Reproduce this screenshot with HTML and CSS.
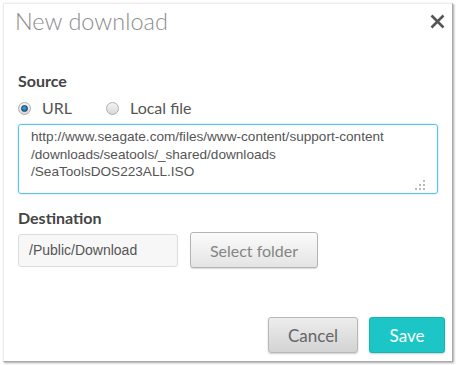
FILE: index.html
```html
<!DOCTYPE html>
<html lang="en">
<head>
    <meta charset="UTF-8">
    <title>New download</title>
    <link rel="stylesheet" href="styles.css">
</head>
<body>
    <div class="page">
        <div class="dialog">
            <div class="dialog-header">
                <h2 class="dialog-title">New download</h2>
                <button class="close-btn" aria-label="Close">
                    <svg width="15" height="15" viewBox="0 0 15 15">
                        <path d="M1.5 1.5 L13.5 13.5 M13.5 1.5 L1.5 13.5" stroke="#555" stroke-width="2.6" fill="none"/>
                    </svg>
                </button>
            </div>

            <div class="dialog-body">
                <div class="field-label source-label">Source</div>
                <div class="radio-row">
                    <label class="radio">
                        <span class="radio-dot checked"></span>
                        URL
                    </label>
                    <label class="radio">
                        <span class="radio-dot"></span>
                        Local file
                    </label>
                </div>
                <div class="url-box">
                    <div class="url-text">http://www.seagate.com/files/www-content/support-content<br>/downloads/seatools/_shared/downloads<br>/SeaToolsDOS223ALL.ISO</div>
                    <span class="grip"></span>
                </div>

                <div class="field-label dest-label">Destination</div>
                <div class="dest-row">
                    <div class="dest-input">/Public/Download</div>
                    <button class="btn btn-light">Select folder</button>
                </div>
            </div>

            <div class="dialog-footer">
                <button class="btn btn-cancel">Cancel</button>
                <button class="btn btn-save">Save</button>
            </div>
        </div>
    </div>
</body>
</html>
```

FILE: styles.css
```css
body {
    margin: 0;
    background: #fff;
    font-family: Lato, "Open Sans", sans-serif;
}

.page {
    padding: 3px;
}

.dialog {
    width: 448px;
    height: 357px;
    border: 1px solid #ececec;
    border-right-color: #aaa;
    border-bottom-color: #aaa;
    box-shadow: 1px 1px 2px rgba(0,0,0,0.35);
    background: #fff;
    display: flex;
    flex-direction: column;
}

.dialog-header {
    display: flex;
    justify-content: space-between;
    align-items: flex-start;
    padding: 0 7px 0 11px;
}

.dialog-title {
    margin: 0;
    font-size: 23.5px;
    font-weight: 300;
    line-height: 35px;
    color: #8c8c8c;
}

.close-btn {
    border: none;
    background: none;
    padding: 0;
    margin-top: 10px;
    width: 15px;
    height: 15px;
    cursor: pointer;
}

.close-btn svg {
    display: block;
}

.dialog-body {
    padding: 0 14px;
}

.field-label {
    font-size: 16px;
    font-weight: bold;
    line-height: 20px;
    color: #454545;
}

.source-label {
    margin-top: 32px;
}

.radio-row {
    display: flex;
    gap: 34px;
    margin-top: 7px;
}

.radio {
    display: flex;
    align-items: center;
    gap: 11px;
    font-size: 16px;
    line-height: 20px;
    color: #555;
}

.radio-dot {
    width: 11px;
    height: 11px;
    border-radius: 50%;
    border: 1px solid #b0b0b0;
    background: linear-gradient(#f4f4f4, #d8d8d8);
    position: relative;
}

.radio-dot.checked::after {
    content: '';
    position: absolute;
    left: 2px;
    top: 2px;
    width: 5px;
    height: 5px;
    border-radius: 50%;
    border: 1px solid #0d3f66;
    background: radial-gradient(circle at 40% 35%, #4b9fd6, #145a8e);
}

.url-box {
    margin-top: 6px;
    height: 68px;
    border: 1px solid #5bc3e8;
    border-radius: 3px;
    box-shadow: 0 0 2px rgba(91,195,232,0.6);
    position: relative;
}

.url-text {
    padding: 3px 12px;
    font-family: "Liberation Sans", Arial, sans-serif;
    font-size: 13.6px;
    line-height: 17.5px;
    color: #555;
}

/* resize grip: one dot, the rest as shadows */
.grip {
    position: absolute;
    right: 12px;
    bottom: 3px;
    width: 2px;
    height: 2px;
    background: #b8b8b8;
    box-shadow:
        -4px 0 #b8b8b8,
        -8px 0 #b8b8b8,
        0 -4px #b8b8b8,
        -4px -4px #b8b8b8,
        0 -8px #b8b8b8;
}

.dest-label {
    margin-top: 14px;
}

.dest-row {
    display: flex;
    align-items: center;
    gap: 12px;
    margin-top: 4px;
}

.dest-input {
    width: 148px;
    height: 31px;
    line-height: 31px;
    padding-left: 10px;
    border: 1px solid #dcdcdc;
    border-radius: 3px;
    background: #f7f7f7;
    font-family: "Liberation Sans", Arial, sans-serif;
    font-size: 14px;
    color: #555;
}

.btn {
    font-family: Lato, "Open Sans", sans-serif;
    height: 36px;
    border-radius: 3px;
    padding: 0;
    cursor: pointer;
}

.btn-light {
    width: 128px;
    font-size: 16px;
    color: #858585;
    border: 1px solid #b4b4b4;
    background: linear-gradient(#fbfbfb, #e4e4e4);
    box-shadow: 0 1px 1px rgba(0,0,0,0.15);
}

.dialog-footer {
    margin-top: auto;
    display: flex;
    justify-content: flex-end;
    gap: 11px;
    padding: 0 7px 8px;
}

.btn-cancel {
    width: 90px;
    font-size: 17px;
    color: #666;
    border: 1px solid #b8b8b8;
    background: linear-gradient(#ededed, #d3d3d3);
    box-shadow: 0 1px 2px rgba(0,0,0,0.2);
}

.btn-save {
    width: 76px;
    font-size: 17px;
    color: #fff;
    border: 1px solid #15b3b3;
    background: #1cc6c6;
    box-shadow: 0 1px 2px rgba(0,0,0,0.2);
}
```
